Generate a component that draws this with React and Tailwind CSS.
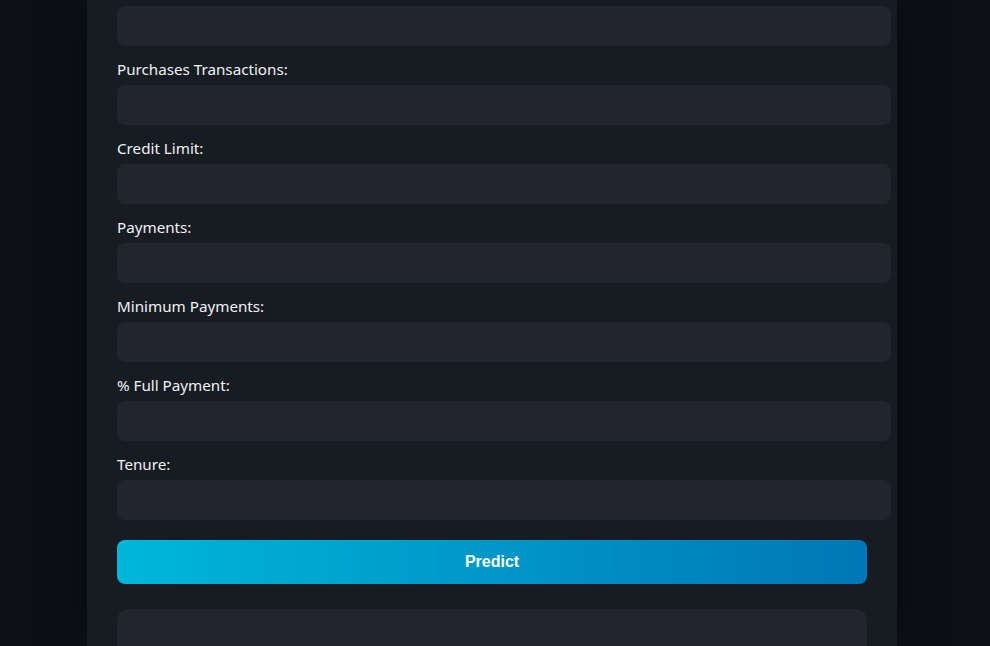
import React from "react";

const FIELDS = [
  "Purchases Transactions:",
  "Credit Limit:",
  "Payments:",
  "Minimum Payments:",
  "% Full Payment:",
  "Tenure:",
];

function Field({ label }) {
  return (
    <div className="flex flex-col">
      <label className="block mb-[8px] text-[15.2px] leading-[16px] text-[#f0f2f5]">{label}</label>
      <input
        type="text"
        className="box-content w-full h-10 px-3 py-0 mb-[15px] rounded-lg bg-[#22252d] border-0 outline-none text-[#e8eaed]"
      />
    </div>
  );
}

export default function App() {
  return (
    <div className="min-h-[646px] h-[646px] overflow-hidden bg-[#0d1117] font-['Noto_Sans',sans-serif]">
      <div className="ml-[87px] w-[810px] h-full bg-[#171b22] shadow-[0_0_40px_rgba(0,0,0,0.55)] px-[30px] pt-[6px]">
        <input
          type="text"
          className="box-content block w-full h-10 px-3 py-0 mb-[15px] rounded-lg bg-[#22252d] border-0 outline-none"
        />
        {FIELDS.map((f) => (
          <Field key={f} label={f} />
        ))}
        <button className="mt-[5px] w-full h-11 rounded-lg bg-gradient-to-r from-[#00b7da] to-[#0077b6] text-white text-[16px] font-bold font-['Liberation_Sans',sans-serif]">
          Predict
        </button>
        <div className="mt-[25px] w-full h-[80px] rounded-xl bg-[#22252d]"></div>
      </div>
    </div>
  );
}
